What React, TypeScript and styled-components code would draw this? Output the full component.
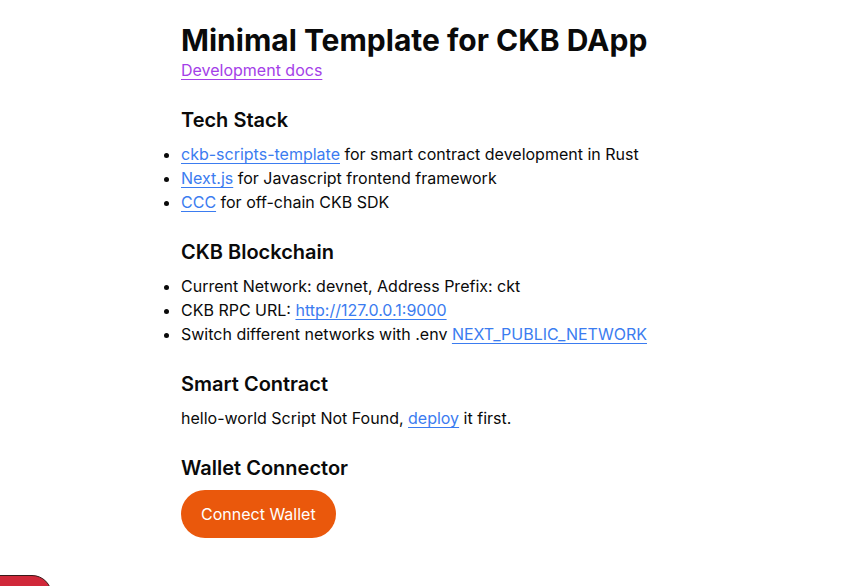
import React from "react";
import styled, { createGlobalStyle } from "styled-components";

const GlobalStyle = createGlobalStyle`
  html, body { margin: 0; padding: 0; background: #ffffff; }
  body { font-family: Inter, "Noto Sans", sans-serif; color: #0a0a0a; overflow: hidden; }
  * { box-sizing: border-box; }
`;

const Page = styled.main`
  width: 483px;
  margin: 0 auto;
  padding-top: 22px;
  display: flex;
  flex-direction: column;
  gap: 24px;
`;

const Header = styled.header`
  display: flex;
  flex-direction: column;
`;

const Title = styled.h1`
  margin: 0;
  font-size: 30px;
  line-height: 36px;
  font-weight: 700;
  white-space: nowrap;
`;

const Section = styled.section`
  display: flex;
  flex-direction: column;
  align-items: flex-start;
  gap: 8px;
`;

const Heading = styled.h2`
  margin: 0;
  font-size: 20px;
  line-height: 28px;
  font-weight: 600;
`;

const List = styled.ul`
  margin: 0;
  padding: 0;
  list-style: disc outside;
  font-size: 16px;
  line-height: 24px;
`;

const Item = styled.li`
  white-space: nowrap;
`;

const Text = styled.p`
  margin: 0;
  font-size: 16px;
  line-height: 24px;
`;

const Link = styled.a<{ $tone?: "blue" | "purple" }>`
  color: ${(p) => (p.$tone === "purple" ? "#a43ee8" : "#3b7cf0")};
  text-decoration: underline;
  text-underline-offset: 3px;
  text-decoration-thickness: 1px;
  font-size: 16px;
  line-height: 24px;
`;

const Button = styled.button`
  height: 48px;
  padding: 0 20px;
  border: none;
  border-radius: 9999px;
  background: #ea580c;
  color: #ffffff;
  font-family: Inter, "Noto Sans", sans-serif;
  font-size: 16px;
  line-height: 24px;
  cursor: pointer;
`;

const DevIndicator = styled.div`
  position: fixed;
  left: -40px;
  top: 575px;
  width: 92px;
  height: 40px;
  border-radius: 20px;
  background: #d0283a;
  border: 1px solid #3a1a1a;
`;

export default function App() {
  return (
    <>
      <GlobalStyle />
      <Page>
        <Header>
          <Title>Minimal Template for CKB DApp</Title>
          <div>
            <Link $tone="purple" href="#">Development docs</Link>
          </div>
        </Header>
        <Section>
          <Heading>Tech Stack</Heading>
          <List>
            <Item>
              <Link href="#">ckb-scripts-template</Link> for smart contract development in Rust
            </Item>
            <Item>
              <Link href="#">Next.js</Link> for Javascript frontend framework
            </Item>
            <Item>
              <Link href="#">CCC</Link> for off-chain CKB SDK
            </Item>
          </List>
        </Section>
        <Section>
          <Heading>CKB Blockchain</Heading>
          <List>
            <Item>Current Network: devnet, Address Prefix: ckt</Item>
            <Item>
              CKB RPC URL: <Link href="#">http://127.0.0.1:9000</Link>
            </Item>
            <Item>
              Switch different networks with .env <Link href="#">NEXT_PUBLIC_NETWORK</Link>
            </Item>
          </List>
        </Section>
        <Section>
          <Heading>Smart Contract</Heading>
          <Text>
            hello-world Script Not Found, <Link href="#">deploy</Link> it first.
          </Text>
        </Section>
        <Section>
          <Heading>Wallet Connector</Heading>
          <Button>Connect Wallet</Button>
        </Section>
      </Page>
      <DevIndicator />
    </>
  );
}
